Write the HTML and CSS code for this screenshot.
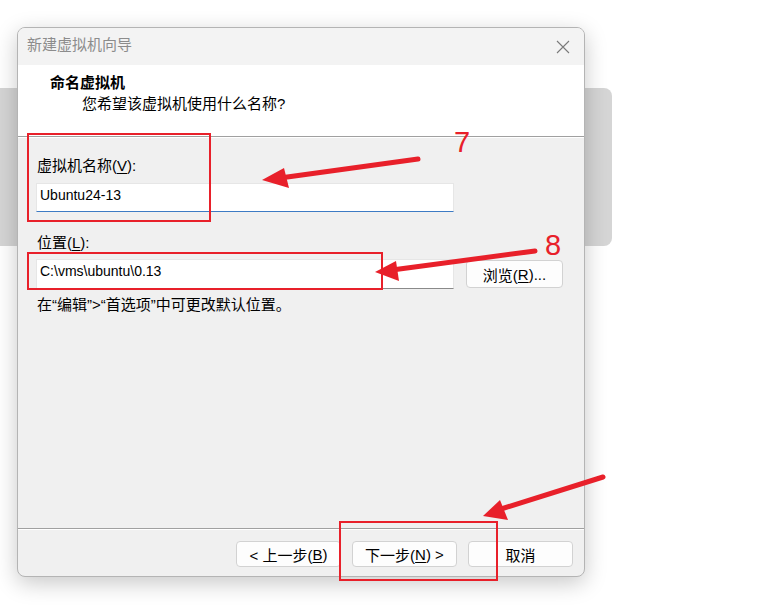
FILE: index.html
```html
<!DOCTYPE html>
<html lang="zh-CN">
<head>
<meta charset="utf-8">
<link rel="stylesheet" href="styles.css">
</head>
<body>
<div class="desk">
  <div class="backwin"></div>
  <div class="dialog">
    <div class="titlebar">
      <span class="title">新建虚拟机向导</span>
      <svg class="close" width="14" height="14" viewBox="0 0 14 14"><path d="M1 1L13 13M13 1L1 13" stroke="#7a7a7a" stroke-width="1.1" fill="none"/></svg>
    </div>
    <div class="header">
      <div class="h-title">命名虚拟机</div>
      <div class="h-sub">您希望该虚拟机使用什么名称?</div>
    </div>
    <div class="body">
      <div class="label first">虚拟机名称(<u>V</u>):</div>
      <div class="row">
        <div class="input focused">Ubuntu24-13</div>
      </div>
      <div class="label second">位置(<u>L</u>):</div>
      <div class="row">
        <div class="input tall">C:\vms\ubuntu\0.13</div>
        <div class="btn browse">浏览(<u>R</u>)...</div>
      </div>
      <div class="hint">在“编辑”&gt;“首选项”中可更改默认位置。</div>
    </div>
    <div class="footer">
      <div class="btn fbtn">&lt; 上一步(<u>B</u>)</div>
      <div class="btn fbtn">下一步(<u>N</u>) &gt;</div>
      <div class="btn fbtn">取消</div>
    </div>
  </div>
  <svg class="annot" width="765" height="607" viewBox="0 0 765 607">
    <g fill="none" stroke="#e8202a" stroke-width="2">
      <rect x="28" y="134" width="182" height="87"/>
      <rect x="28" y="253" width="354" height="36"/>
      <rect x="340" y="522" width="157" height="58"/>
    </g>
    <g stroke="#e8202a" stroke-width="5" stroke-linecap="round">
      <line x1="418" y1="159" x2="280" y2="178"/>
      <line x1="535" y1="251" x2="392" y2="270"/>
      <line x1="603" y1="477" x2="498" y2="510"/>
    </g>
    <g fill="#e8202a">
      <polygon points="262,180 284,168 289,188"/>
      <polygon points="375,272 396,261 399,281"/>
      <polygon points="483,516 500,500 508,520"/>
    </g>
    <text x="454" y="152" class="num">7</text>
    <text x="545" y="255" class="num">8</text>
  </svg>
</div>
</body>
</html>
```
FILE: styles.css
```css
html, body {
  margin: 0;
  padding: 0;
  background: #ffffff;
}
body {
  font-family: "Liberation Sans", "Noto Sans CJK SC", sans-serif;
  font-size: 15px;
  color: #000;
}
.desk {
  position: relative;
  width: 765px;
  height: 607px;
  overflow: hidden;
}
.backwin {
  position: absolute;
  left: 0;
  top: 88px;
  width: 612px;
  height: 158px;
  background: #d5d5d5;
  border-radius: 0 8px 8px 0;
}
.dialog {
  position: absolute;
  left: 17px;
  top: 27px;
  width: 566px;
  height: 548px;
  border: 1px solid #b4b4b4;
  border-radius: 8px;
  background: #f0f0f0;
  box-shadow: 0 6px 22px rgba(0,0,0,0.22);
  display: flex;
  flex-direction: column;
  overflow: hidden;
}
.titlebar {
  height: 37px;
  box-sizing: border-box;
  background: #f3f3f3;
  display: flex;
  align-items: center;
  justify-content: space-between;
  padding: 0 14px 3px 9px;
  flex-shrink: 0;
}
.title {
  color: #8c8c8c;
  line-height: 18px;
}
.close {
  display: block;
  margin-top: 3px;
}
.header {
  height: 72px;
  background: #ffffff;
  border-bottom: 1px solid #a0a0a0;
  box-sizing: border-box;
  flex-shrink: 0;
  padding-top: 8px;
}
.h-title {
  margin-left: 32px;
  font-weight: bold;
  line-height: 20px;
}
.h-sub {
  margin-left: 64px;
  margin-top: 1px;
  line-height: 20px;
}
.body {
  flex: 1;
  border-top: 1px solid #ffffff;
  border-bottom: 1px solid #a0a0a0;
  padding: 0 0 0 18px;
  display: flex;
  flex-direction: column;
}
.label {
  line-height: 20px;
  margin-left: 1px;
}
.label.first { margin-top: 18px; margin-bottom: 7px; }
.label.second { margin-top: 21px; margin-bottom: 6px; }
u { text-decoration: underline; text-underline-offset: 2px; }
.row {
  display: flex;
  align-items: center;
  gap: 12px;
}
.input {
  width: 418px;
  height: 29px;
  box-sizing: border-box;
  background: #ffffff;
  border: 1px solid #e6e6e6;
  border-bottom: 1px solid #8a8a8a;
  font-size: 14px;
  line-height: 23px;
  padding-left: 3px;
}
.input.tall {
  height: 30px;
  line-height: 22px;
}
.input.focused {
  border-bottom: 1px solid #3d7bc4;
}
.btn {
  box-sizing: border-box;
  background: #fdfdfd;
  border: 1px solid #d2d2d2;
  border-radius: 4px;
  display: flex;
  align-items: center;
  justify-content: center;
}
.browse {
  width: 97px;
  height: 28px;
}
.hint {
  margin-top: 6px;
  margin-left: 1px;
  line-height: 20px;
}
.footer {
  height: 47px;
  flex-shrink: 0;
  border-top: 1px solid #ffffff;
  display: flex;
  justify-content: flex-end;
  align-items: flex-start;
  gap: 11px;
  padding: 11px 11px 0 0;
  box-sizing: border-box;
}
.fbtn {
  width: 105px;
  height: 26px;
}
.annot {
  position: absolute;
  left: 0;
  top: 0;
}
.num {
  font-family: "Liberation Sans", sans-serif;
  font-size: 29px;
  fill: #e8202a;
}
```
